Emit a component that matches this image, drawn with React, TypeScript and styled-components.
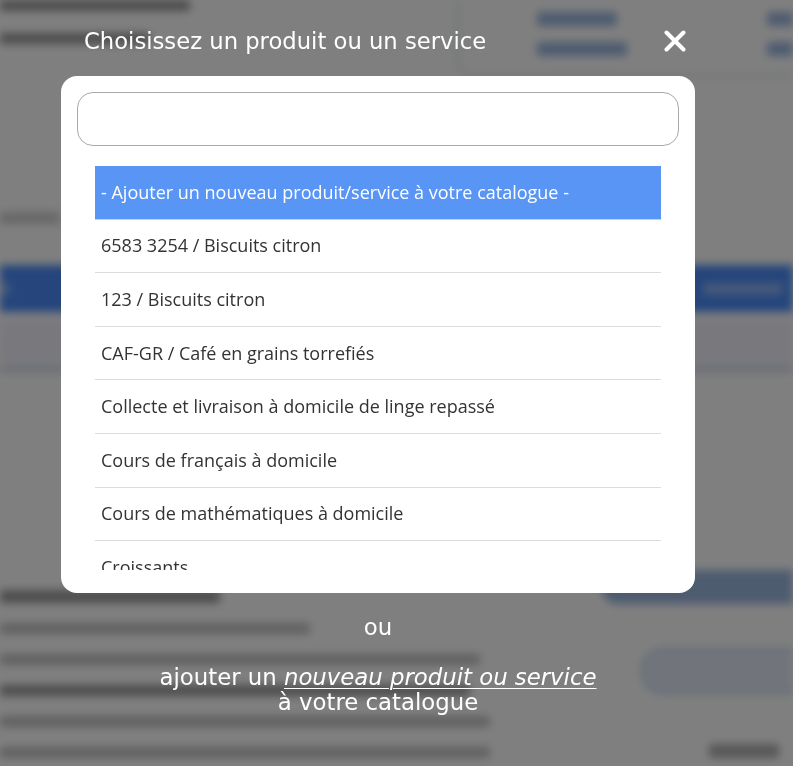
import styled, { createGlobalStyle } from "styled-components";

const GlobalStyle = createGlobalStyle`
  html, body {
    margin: 0;
    padding: 0;
    background: #ffffff;
  }
  body {
    font-family: "Open Sans", "Liberation Sans", sans-serif;
    overflow: hidden;
  }
`

const Page = styled.div`
  width: 793px;
  height: 766px;
  overflow: hidden;
  filter: blur(4px);
  color: #333;
`

const TopBar = styled.div`
  display: flex;
  justify-content: space-between;
  height: 76px;
`

const TopLeft = styled.div`
  display: flex;
  flex-direction: column;
  gap: 22px;
  padding-left: 0;
`

const Line = styled.div<{ w: number; bold?: boolean; dark?: boolean }>`
  width: ${p => p.w}px;
  height: ${p => (p.bold ? 13 : 11)}px;
  background: ${p => (p.dark ? '#9a9a9a' : '#c2c2c2')};
  border-radius: 3px;
`

const InfoBox = styled.div`
  width: 336px;
  box-sizing: border-box;
  border: 2px solid #d5dbe6;
  border-top: none;
  border-right: none;
  border-bottom-left-radius: 14px;
  display: flex;
  gap: 140px;
  padding: 12px 0 0 78px;
`

const InfoCol = styled.div`
  display: flex;
  flex-direction: column;
  gap: 16px;
`

const BlueBit = styled.div<{ w: number }>`
  width: ${p => p.w}px;
  height: 14px;
  background: #9cb8e0;
  border-radius: 3px;
`

const Faint = styled.div`
  margin-top: 136px;
  height: 12px;
  width: 60px;
  background: #d0d0d0;
`

const TableHead = styled.div`
  margin-top: 41px;
  height: 47px;
  background: #4a8bf8;
  display: flex;
  align-items: center;
  justify-content: space-between;
  padding: 0 10px 0 0;
`

const HeadText = styled.div<{ w: number }>`
  width: ${p => p.w}px;
  height: 12px;
  background: #8db3f5;
  border-radius: 3px;
`

const TableRow = styled.div`
  margin-top: 8px;
  height: 48px;
  background: #f3f3fa;
  border-bottom: 4px solid #c4cfe0;
`

const Lower = styled.div`
  margin-top: 198px;
  display: flex;
  justify-content: space-between;
`

const LowerLeft = styled.div`
  display: flex;
  flex-direction: column;
  gap: 20px;
  padding-top: 20px;
`

const LowerRight = styled.div`
  display: flex;
  flex-direction: column;
  align-items: flex-end;
  gap: 44px;
`

const PillButton = styled.div<{ w: number; filled?: boolean }>`
  width: ${p => p.w}px;
  height: ${p => (p.filled ? 30 : 42)}px;
  border-radius: 22px 0 0 22px;
  background: ${p => (p.filled ? '#9cb8e0' : '#e3ebf7')};
  border: 2px solid ${p => (p.filled ? '#9cb8e0' : '#b2c8ea')};
  border-right: none;
`

const TotalLabel = styled.div`
  margin: 6px 14px 0 0;
  width: 70px;
  height: 14px;
  background: #b0b0b0;
  border-radius: 3px;
`

const Overlay = styled.div`
  position: fixed;
  inset: 0;
  background: rgba(0, 0, 0, 0.5);
`

const Dialog = styled.div`
  width: 634px;
  margin-left: 61px;
  display: flex;
  flex-direction: column;
`

const Header = styled.div`
  height: 76px;
  display: flex;
  align-items: center;
  justify-content: space-between;
  padding: 6px 9px 0 23px;
  box-sizing: border-box;
`

const Title = styled.h2`
  margin: 0;
  color: #fff;
  font-family: "DejaVu Sans", "Liberation Sans", sans-serif;
  font-weight: 400;
  font-size: 22.7px;
`

const Close = styled.button`
  border: none;
  background: none;
  padding: 0;
  width: 22px;
  height: 22px;
  display: flex;
  cursor: pointer;
`

const Card = styled.div`
  background: #fff;
  border-radius: 16px;
  padding: 16px 16px 23px;
  display: flex;
  flex-direction: column;
  gap: 20px;
`

const Search = styled.input`
  height: 54px;
  box-sizing: border-box;
  border: 1px solid #a9a9a9;
  border-radius: 16px;
  outline: none;
  padding: 0 16px;
  font-size: 17px;
  font-family: "Open Sans", sans-serif;
`

const List = styled.ul`
  list-style: none;
  margin: 0 18px;
  padding: 0;
  height: 404px;
  overflow: hidden;
`

const Item = styled.li<{ active?: boolean }>`
  height: 53.6px;
  box-sizing: border-box;
  display: flex;
  align-items: center;
  padding: 0 6px 1px;
  font-size: 18px;
  color: ${p => (p.active ? '#fff' : '#333')};
  background: ${p => (p.active ? '#5895f5' : 'transparent')};
  border-bottom: 1px solid ${p => (p.active ? '#bcd4fb' : '#dcdcdc')};
`

const Footer = styled.div`
  display: flex;
  flex-direction: column;
  align-items: center;
  color: #fff;
  font-family: "DejaVu Sans", "Liberation Sans", sans-serif;
  font-size: 22.8px;
  line-height: 25px;
  padding-top: 22px;
`

const Or = styled.div`
  margin-bottom: 25px;
`

const NewLink = styled.a`
  color: #fff;
  font-style: italic;
  text-decoration: underline;
  text-underline-offset: 3px;
  text-decoration-thickness: 1px;
`

const items = [
  '6583 3254 / Biscuits citron',
  '123 / Biscuits citron',
  'CAF-GR / Café en grains torrefiés',
  'Collecte et livraison à domicile de linge repassé',
  'Cours de français à domicile',
  'Cours de mathématiques à domicile',
  'Croissants',
]

const App = () => {
  return (
    <>
      <GlobalStyle />
      <Page>
        <TopBar>
          <TopLeft>
            <Line w={190} dark />
            <Line w={150} dark />
          </TopLeft>
          <InfoBox>
            <InfoCol>
              <BlueBit w={80} />
              <BlueBit w={90} />
            </InfoCol>
            <InfoCol>
              <BlueBit w={40} />
              <BlueBit w={40} />
            </InfoCol>
          </InfoBox>
        </TopBar>
        <Faint />
        <TableHead>
          <HeadText w={10} />
          <HeadText w={80} />
        </TableHead>
        <TableRow />
        <Lower>
          <LowerLeft>
            <Line w={220} bold dark />
            <Line w={310} />
            <Line w={480} />
            <Line w={470} dark />
            <Line w={490} />
            <Line w={490} />
          </LowerLeft>
          <LowerRight>
            <PillButton w={190} filled />
            <PillButton w={150} />
            <TotalLabel />
          </LowerRight>
        </Lower>
      </Page>
      <Overlay>
        <Dialog>
          <Header>
            <Title>Choisissez un produit ou un service</Title>
            <Close aria-label="Fermer">
              <svg width="22" height="22" viewBox="0 0 22 22">
                <path d="M2.5 2.5 L19.5 19.5 M19.5 2.5 L2.5 19.5" stroke="#fff" strokeWidth="4" strokeLinecap="round" />
              </svg>
            </Close>
          </Header>
          <Card>
            <Search />
            <List>
              <Item active>- Ajouter un nouveau produit/service à votre catalogue -</Item>
              {items.map(t => (
                <Item key={t}>{t}</Item>
              ))}
            </List>
          </Card>
          <Footer>
            <Or>ou</Or>
            <div>
              ajouter un <NewLink>nouveau produit ou service</NewLink>
            </div>
            <div>à votre catalogue</div>
          </Footer>
        </Dialog>
      </Overlay>
    </>
  )
}

export default App
